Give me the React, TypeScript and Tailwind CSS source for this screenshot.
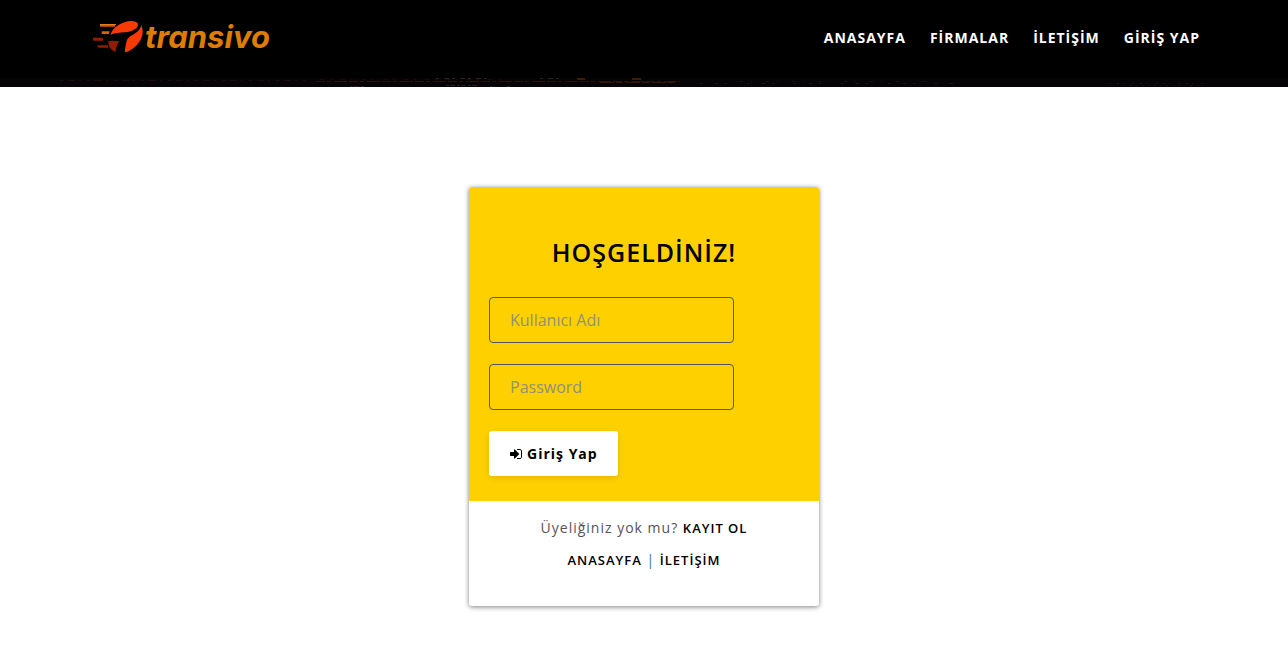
import { useState } from "react";
import type { FormEvent } from "react";

const navItems = ["ANASAYFA", "FİRMALAR", "İLETİŞİM", "GİRİŞ YAP"];

function Logo() {
  return (
    <a href="#" aria-label="transivo" className="flex items-center gap-0.5">
      <svg width="50" height="34" viewBox="0 0 150 102" aria-hidden="true">
        <path d="M21 12H68L66 20H21Z" fill="#d6560b" />
        <path d="M21 12H68V15H21Z" fill="#ec7b1c" />
        <path d="M26 34H50L48 42H26Z" fill="#d95f12" />
        <path d="M0 53H29L31 62H0Z" fill="#8f1d04" />
        <path d="M12 76H45V83H16Z" fill="#8f1d04" />
        <path d="M52 45C60 20 88 4 114 3C126 3 135 7 135 14C134 27 116 34 96 37C80 39 65 38 52 45Z" fill="#f83b05" />
        <path d="M145 15C152 31 150 50 139 65C128 81 113 93 96 97C95 89 98 78 100 67C102 56 108 50 118 45C130 39 141 31 145 15Z" fill="#f83b05" />
        <path d="M46 64C57 60 68 63 79 64C72 73 69 84 67 96C54 91 46 80 46 64Z" fill="#8f1d04" />
      </svg>
      <span className="font-['Inter',sans-serif] text-[31px] leading-8 font-bold text-[#df7c05] italic">
        transivo
      </span>
    </a>
  );
}

function CityLights() {
  return (
    <svg className="block h-[9px] w-full bg-[#050306]" viewBox="0 0 1288 9" preserveAspectRatio="none" aria-hidden="true">
      <g fill="none">
        <path d="M60 2.500H310" stroke="#1d0b08" strokeDasharray="3 5 7 4 2 6" />
        <path d="M316 3.500H680" stroke="#2c1206" strokeDasharray="9 2 4 3 13 2" />
        <path d="M320 1.500H500" stroke="#180a06" strokeDasharray="4 6 2 9" />
        <path d="M436 .5H490M540 .5H560" stroke="#232427" strokeDasharray="3 5 5 3" />
        <path d="M577 1H585M632 1H641" stroke="#3d1e05" strokeWidth="2" />
        <path d="M600 4.500H678" stroke="#331805" strokeDasharray="14 2 7 3" />
        <path d="M350 8.500H365M446 7.500H478M490 8.500H495M507 8.500H511" stroke="#252024" strokeDasharray="3 1 5 2" />
        <path d="M700 5.500H960" stroke="#15171b" strokeDasharray="2 13 3 7 2 20" />
        <path d="M740 3.500H930" stroke="#161114" strokeDasharray="3 8 1 14" />
        <path d="M1110 5.500H1205" stroke="#231413" strokeDasharray="1 6 2 4 1 9" />
        <path d="M1125 7.500H1200" stroke="#1b1113" strokeDasharray="1 4 2 5" />
      </g>
    </svg>
  );
}

const inputClass =
  "block h-[46px] w-[245px] max-w-full rounded border border-[#555] bg-transparent px-5 text-base text-[#555] outline-none placeholder:text-[#8e917c] focus:border-black";

export default function App() {
  const [username, setUsername] = useState("");
  const [password, setPassword] = useState("");

  return (
    <div className="min-h-screen bg-white font-['Open_Sans','Noto_Sans',sans-serif] text-black">
      <header className="bg-black">
        <div className="mx-auto flex h-[78px] max-w-[1140px] items-center justify-between pr-3.5 pb-1 pl-[19px]">
          <Logo />
          <nav aria-label="Ana menü" className="flex gap-6 pt-0.5 text-sm font-bold tracking-[1px] text-white">
            {navItems.map((item) => (
              <a key={item} href="#" className="hover:text-[#ffd000]">{item}</a>
            ))}
          </nav>
        </div>
        <CityLights />
      </header>

      <main className="px-4 pt-[100px] pb-16">
        <section className="mx-auto w-full max-w-[350px] overflow-hidden rounded-[3px] bg-white shadow-[0_1px_5px_rgba(0,0,0,0.5)]">
          <div className="bg-[#ffd000] px-5 pt-[47px] pb-[25px]">
            <h1 className="text-center text-[25px] leading-9 font-semibold tracking-[1px]">HOŞGELDİNİZ!</h1>
            <form
              className="mt-[27px] flex flex-col items-start gap-[21px]"
              onSubmit={(event: FormEvent) => event.preventDefault()}
            >
              <input type="text" aria-label="Kullanıcı Adı" placeholder="Kullanıcı Adı" autoComplete="username" value={username} onChange={(e) => setUsername(e.target.value)} className={inputClass} />
              <input type="password" aria-label="Password" placeholder="Password" autoComplete="current-password" value={password} onChange={(e) => setPassword(e.target.value)} className={inputClass} />
              <button type="submit" className="flex h-[45px] cursor-pointer items-center gap-1 rounded-[3px] bg-white px-5 text-sm font-bold tracking-[1px] shadow-[0_2px_6px_rgba(0,0,0,0.12)]">
                <svg width="14" height="14" viewBox="0 0 1792 1792" fill="currentColor" aria-hidden="true">
                  <path d="M1312 896q0 26-19 45l-544 544q-19 19-45 19t-45-19-19-45v-288H192q-26 0-45-19t-19-45V704q0-26 19-45t45-19h448V352q0-26 19-45t45-19 45 19l544 544q19 19 19 45zm352-352v704q0 119-84.500 203.500T1376 1536h-320q-13 0-22.500-9.500T1024 1504q0-4-1-20t-.5-26.500 3-23.500 10-19.500 20.500-6.500h320q66 0 113-47t47-113V544q0-66-47-113t-113-47h-312l-11.500-1-11.500-3-8-5.500-7-9-2-13.500q0-4-1-20t-.5-26.500 3-23.500 10-19.500 20.500-6.500h320q119 0 203.500 84.500T1664 544z" />
                </svg>
                Giriş Yap
              </button>
            </form>
          </div>
          <div className="px-5 pt-[11px] pb-[30px] text-center text-sm leading-8 tracking-[1px] text-[#555]">
            <p>
              Üyeliğiniz yok mu?{" "}
              <a href="#" className="text-[13px] font-semibold text-black">KAYIT OL</a>
            </p>
            <p>
              <a href="#" className="text-[13px] font-semibold text-black">ANASAYFA</a>
              {" "}<span className="text-[#346fa8]">|</span>{" "}
              <a href="#" className="text-[13px] font-semibold text-black">İLETİŞİM</a>
            </p>
          </div>
        </section>
      </main>
    </div>
  );
}
